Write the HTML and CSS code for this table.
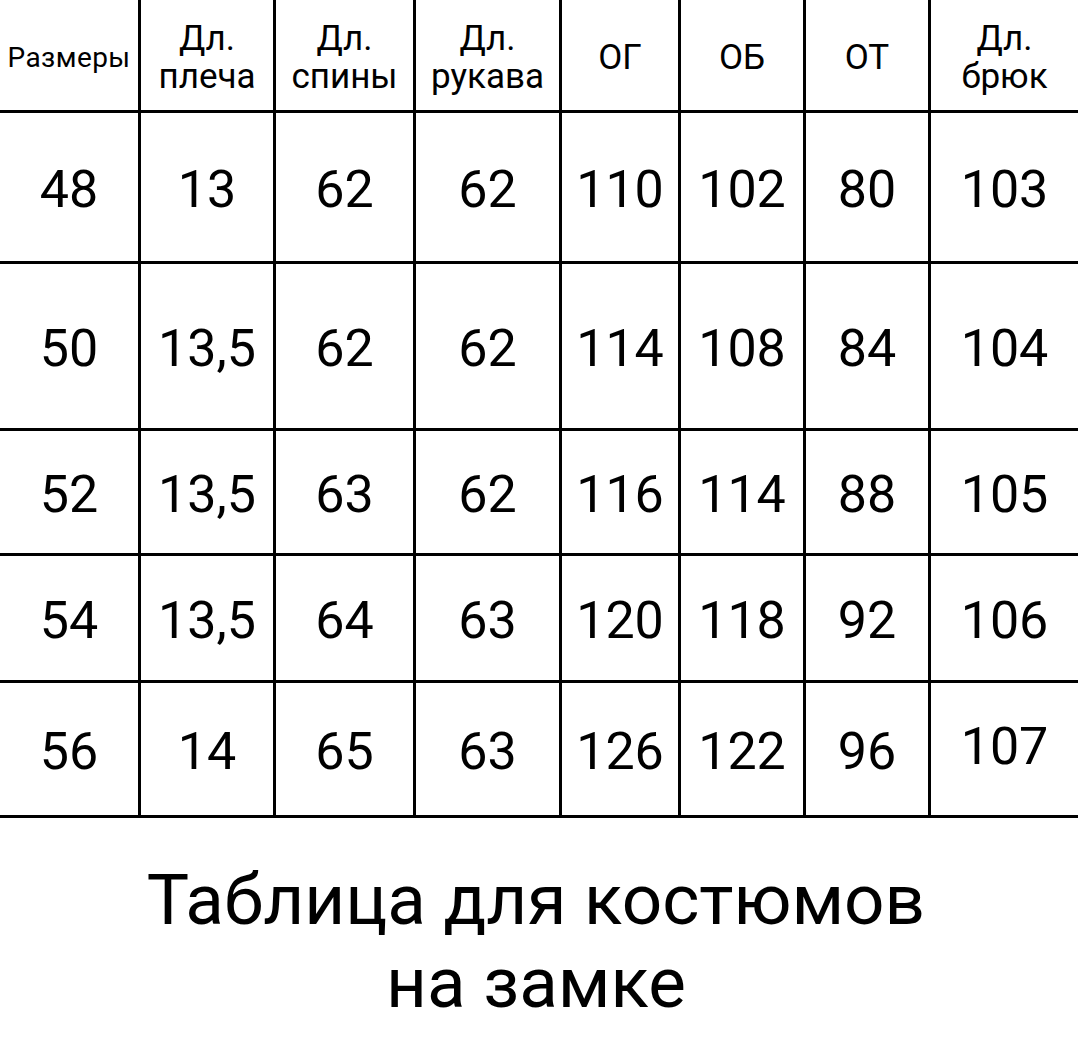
FILE: index.html
```html
<!DOCTYPE html>
<html lang="ru">
<head>
<meta charset="utf-8">
<title>Таблица для костюмов на замке</title>
<link rel="stylesheet" href="styles.css">
</head>
<body>
<div class="page">
  <div class="table">
    <div class="cell head small">Размеры</div>
    <div class="cell head">Дл.<br>плеча</div>
    <div class="cell head">Дл.<br>спины</div>
    <div class="cell head">Дл.<br>рукава</div>
    <div class="cell head">ОГ</div>
    <div class="cell head">ОБ</div>
    <div class="cell head">ОТ</div>
    <div class="cell head last">Дл.<br>брюк</div>

    <div class="cell num">48</div><div class="cell num">13</div><div class="cell num">62</div><div class="cell num">62</div><div class="cell num">110</div><div class="cell num">102</div><div class="cell num">80</div><div class="cell num last">103</div>
    <div class="cell num">50</div><div class="cell num">13,5</div><div class="cell num">62</div><div class="cell num">62</div><div class="cell num">114</div><div class="cell num">108</div><div class="cell num">84</div><div class="cell num last">104</div>
    <div class="cell num">52</div><div class="cell num">13,5</div><div class="cell num">63</div><div class="cell num">62</div><div class="cell num">116</div><div class="cell num">114</div><div class="cell num">88</div><div class="cell num last">105</div>
    <div class="cell num">54</div><div class="cell num">13,5</div><div class="cell num">64</div><div class="cell num">63</div><div class="cell num">120</div><div class="cell num">118</div><div class="cell num">92</div><div class="cell num last">106</div>
    <div class="cell num">56</div><div class="cell num">14</div><div class="cell num">65</div><div class="cell num">63</div><div class="cell num">126</div><div class="cell num">122</div><div class="cell num">96</div><div class="cell num last raised">107</div>
  </div>
  <div class="title">Таблица для костюмов<br>на замке</div>
</div>
</body>
</html>
```

FILE: styles.css
```css
html, body {
  margin: 0;
  padding: 0;
  background: #fff;
}
.page {
  width: 1078px;
  height: 1040px;
  overflow: hidden;
  font-family: Roboto, "Noto Sans", sans-serif;
  color: #000;
}
.table {
  display: grid;
  grid-template-columns: 141px 135px 140px 146px 119px 125px 125px 147px;
  grid-template-rows: 113px 151px 167px 125px 127px 135px;
}
.cell {
  box-sizing: border-box;
  border-right: 3px solid #000;
  border-bottom: 3px solid #000;
  display: flex;
  align-items: center;
  justify-content: center;
  text-align: center;
}
.cell.last {
  border-right: none;
}
.head {
  font-size: 35px;
  line-height: 38px;
  padding-top: 5px;
}
.head.small {
  font-size: 28px;
  letter-spacing: 0.4px;
  white-space: nowrap;
}
.num {
  font-size: 52px;
  padding-top: 4px;
}
.num.raised {
  padding-top: 0;
  padding-bottom: 6px;
}
.title {
  text-align: center;
  font-size: 71px;
  line-height: 83px;
  padding-top: 40px;
  padding-right: 6px;
}
```
